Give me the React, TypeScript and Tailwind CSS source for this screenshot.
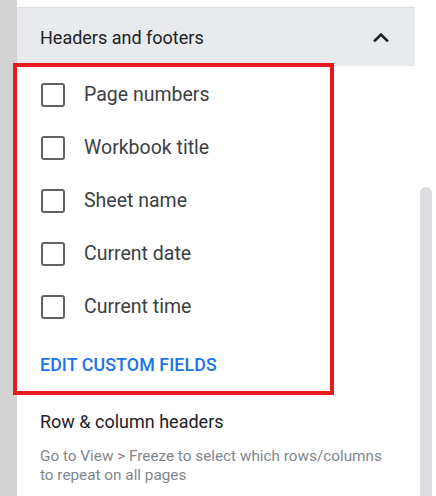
const OPTIONS = ["Page numbers", "Workbook title", "Sheet name", "Current date", "Current time"];

function Checkbox() {
  return <span className="block w-[24px] h-[24px] rounded-[3px] border-2 border-[#5f6368] shrink-0" />;
}

export default function App() {
  return (
    <div
      className="relative flex w-[436px] h-[496px] overflow-hidden bg-white"
      style={{ fontFamily: "Roboto, 'Noto Sans', Arial, sans-serif" }}
    >
      {/* left gutter */}
      <div className="w-[17px] shrink-0 bg-[#d3d3d3]" />

      {/* panel */}
      <div className="w-[398px] shrink-0 pt-[7px]">
        <div className="h-[59px] border-t border-[#dadce0] bg-[#e8eaed] flex items-center justify-between pl-[23px] pr-[26px]">
          <span className="text-[18px] text-[#202124]">Headers and footers</span>
          <svg width="16" height="10" viewBox="0 0 16 10" fill="none" stroke="#202124" strokeWidth="2.6" strokeLinecap="square">
            <path d="M2 8.5 8 2.5l6 6" />
          </svg>
        </div>

        <div className="pl-[24px] pt-[2px]">
          {OPTIONS.map((o) => (
            <div key={o} className="h-[53px] flex items-center gap-[19px]">
              <Checkbox />
              <span className="text-[19.5px] text-[#3c4043]">{o}</span>
            </div>
          ))}
        </div>

        <div className="pl-[23px] pt-[21px]">
          <div className="text-[17.8px] leading-[22px] font-medium text-[#1a73e8] tracking-[0.1px]">EDIT CUSTOM FIELDS</div>
          <div className="mt-[35px] text-[18px] leading-[22px] text-[#202124]">Row &amp; column headers</div>
          <div className="mt-[14px] text-[15.3px] leading-[19px] text-[#80868b] pr-[20px]">
            Go to View &gt; Freeze to select which rows/columns to repeat on all pages
          </div>
        </div>
      </div>

      {/* scrollbar */}
      <div className="flex-1 pl-[5px] pr-[4px] pt-[187px]">
        <div className="h-full rounded-t-[6px] bg-[#dadce0]" />
      </div>

      {/* annotation box */}
      <div className="absolute left-[13px] top-[63px] w-[321px] h-[332px] border-4 border-[#e8191f] pointer-events-none" />
    </div>
  );
}
